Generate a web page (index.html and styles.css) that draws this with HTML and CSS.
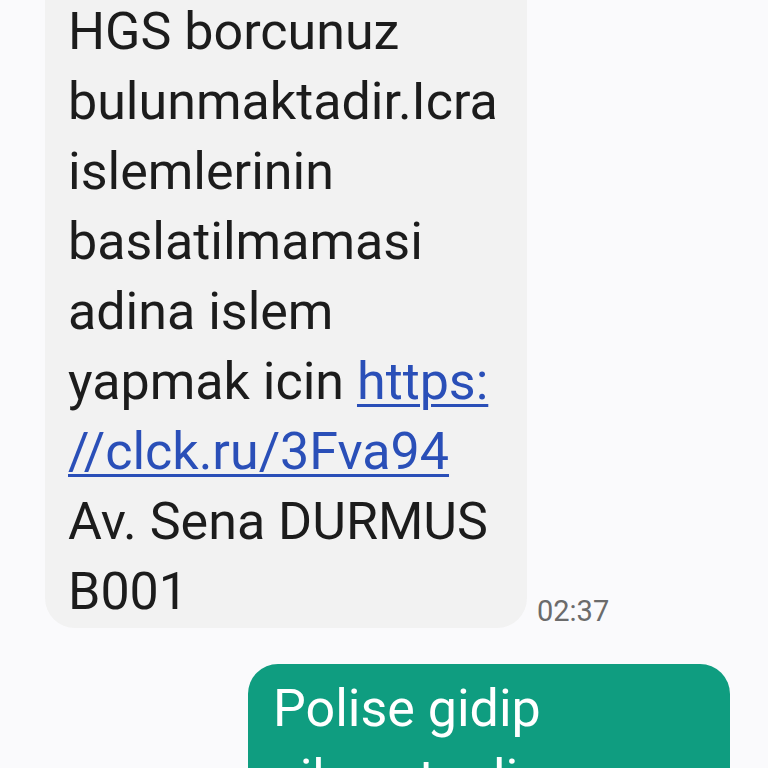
FILE: index.html
```html
<!DOCTYPE html>
<html lang="en">
<head>
    <meta charset="UTF-8">
    <meta name="viewport" content="width=device-width, initial-scale=1.0">
    <title>Mesajlar</title>
    <link rel="stylesheet" href="styles.css">
</head>
<body>
    <div class="thread">
        <div class="row incoming">
            <div class="bubble received">
                HGS borcunuz<br>
                bulunmaktadir.Icra<br>
                islemlerinin<br>
                baslatilmamasi<br>
                adina islem<br>
                yapmak icin <a href="#">https:<br>//clck.ru/3Fva94</a><br>
                Av. Sena DURMUS<br>
                B001
            </div>
            <div class="time">02:37</div>
        </div>

        <div class="row outgoing">
            <div class="bubble sent">
                Polise gidip<br>
                sikayet edin
            </div>
        </div>
    </div>
</body>
</html>
```

FILE: styles.css
```css
* {
    margin: 0;
    padding: 0;
    box-sizing: border-box;
}

body {
    background: #fafafc;
    font-family: Roboto, "Noto Sans", sans-serif;
    width: 768px;
    height: 768px;
    overflow: hidden;
}

.thread {
    display: flex;
    flex-direction: column;
    gap: 36px;
    margin-top: -40px;
}

.row {
    display: flex;
    align-items: flex-end;
}

.incoming {
    padding-left: 45px;
}

.outgoing {
    justify-content: flex-end;
    padding-right: 38px;
}

.bubble {
    font-size: 52px;
    line-height: 70px;
    border-radius: 30px;
}

.received {
    background: #f2f2f2;
    color: #1c1c1c;
    width: 482px;
    padding: 37px 10px 1px 23px;
    border-radius: 0 0 30px 30px;
}

.received a {
    color: #2a4fb8;
    text-decoration: underline;
    text-decoration-thickness: 3px;
    text-underline-offset: 5px;
}

.sent {
    background: #0f9d80;
    color: #ffffff;
    width: 482px;
    padding: 10px 20px 20px 25px;
}

.time {
    color: #6b6b6b;
    font-size: 29px;
    line-height: 34px;
    margin-left: 10px;
    margin-bottom: 0;
}
```
